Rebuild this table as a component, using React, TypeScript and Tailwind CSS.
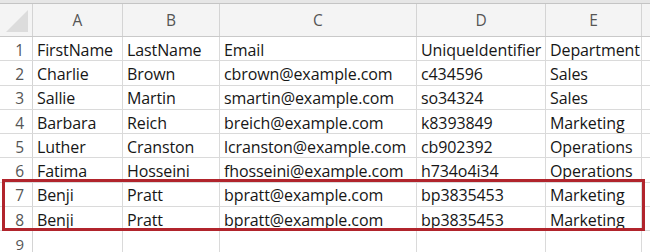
import React from "react";

const cols = [
  { l: "A", w: 90 },
  { l: "B", w: 97 },
  { l: "C", w: 197 },
  { l: "D", w: 129 },
  { l: "E", w: 96 },
];

const rows: string[][] = [
  ["FirstName", "LastName", "Email", "UniqueIdentifier", "Department"],
  ["Charlie", "Brown", "cbrown@example.com", "c434596", "Sales"],
  ["Sallie", "Martin", "smartin@example.com", "so34324", "Sales"],
  ["Barbara", "Reich", "breich@example.com", "k8393849", "Marketing"],
  ["Luther", "Cranston", "lcranston@example.com", "cb902392", "Operations"],
  ["Fatima", "Hosseini", "fhosseini@example.com", "h734o4i34", "Operations"],
  ["Benji", "Pratt", "bpratt@example.com", "bp3835453", "Marketing"],
  ["Benji", "Pratt", "bpratt@example.com", "bp3835453", "Marketing"],
];

export default function App() {
  return (
    <div
      className="relative w-[650px] h-[252px] overflow-hidden bg-white text-[#161616] flex flex-col"
      style={{ fontFamily: "'Open Sans', 'Liberation Sans', sans-serif" }}
    >
      <div className="h-[4px] shrink-0 bg-[#e6e6e6] border-b border-[#c4c4c4]" />
      {/* header row */}
      <div className="flex shrink-0 h-[33px] bg-[#f4f4f4] border-b border-[#c9c9c9]">
        <div className="relative w-[33px] shrink-0 border-r border-[#d4d4d4]">
          <svg className="absolute right-[4px] bottom-[4px]" width="22" height="22" viewBox="0 0 22 22">
            <polygon points="22,0 22,22 0,22" fill="#dcdcdc" />
          </svg>
        </div>
        {cols.map((c) => (
          <div
            key={c.l}
            style={{ width: c.w }}
            className="shrink-0 flex items-center justify-center pt-[1px] border-r border-[#d4d4d4] text-[15.5px] text-[#555]"
          >
            {c.l}
          </div>
        ))}
        <div className="flex-1" />
      </div>
      {rows.map((r, i) => (
        <div key={i} className="flex shrink-0 h-[24.3px] border-b border-[#dadada]">
          <div className="w-[33px] shrink-0 flex items-center justify-end pr-[8px] pt-[2px] border-r border-[#d4d4d4] text-[15.5px] leading-[16px] text-[#555]">
            {i + 1}
          </div>
          {r.map((v, j) => (
            <div
              key={j}
              style={{ width: cols[j].w }}
              className="shrink-0 flex items-center pl-[4px] pt-[2px] border-r border-[#dadada] text-[16px] leading-[18px] tracking-[-0.1px] whitespace-nowrap overflow-hidden"
            >
              {v}
            </div>
          ))}
          <div className="flex-1" />
        </div>
      ))}
      <div className="flex flex-1 min-h-0">
        <div className="w-[33px] shrink-0 flex items-end justify-end pr-[8px] border-r border-[#d4d4d4] text-[15px] leading-[16px] text-[#555]">
          9
        </div>
        {cols.map((c) => (
          <div key={c.l} style={{ width: c.w }} className="shrink-0 border-r border-[#dadada]" />
        ))}
        <div className="flex-1" />
      </div>
      <div className="absolute left-[2px] top-[179px] w-[643px] h-[52px] border-[3px] border-[#b1242c]" />
    </div>
  );
}
